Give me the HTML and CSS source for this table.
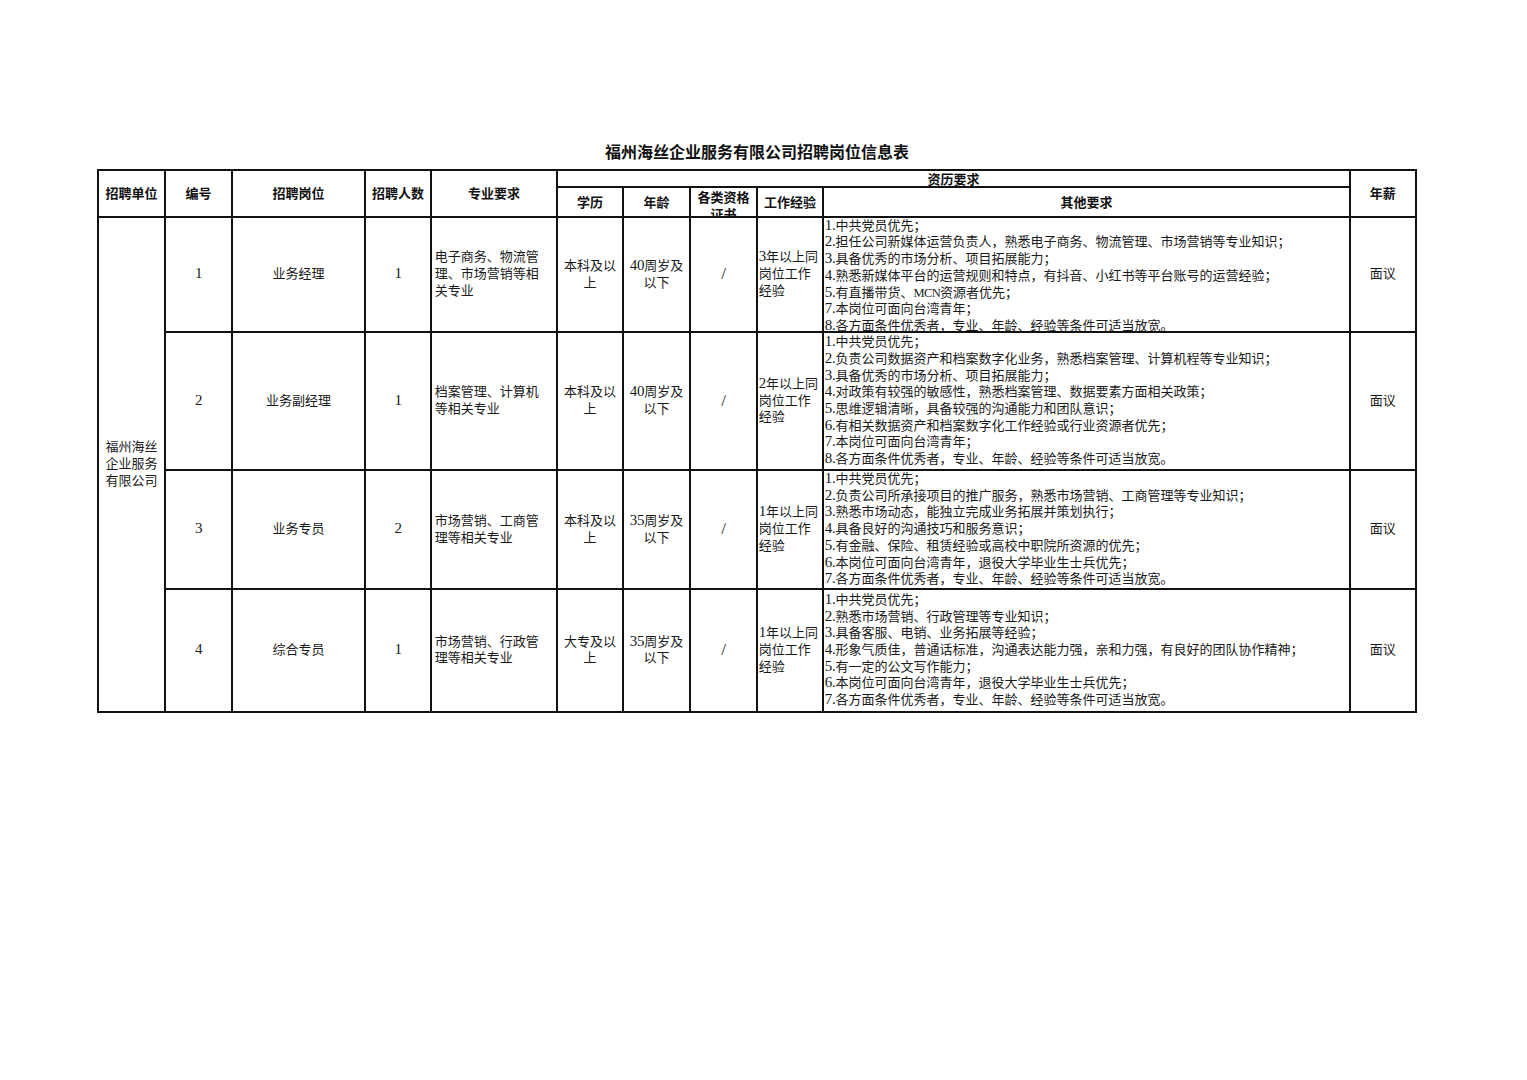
FILE: index.html
```html
<!DOCTYPE html>
<html lang="zh-CN">
<head>
<meta charset="utf-8">
<title>福州海丝企业服务有限公司招聘岗位信息表</title>
<link rel="stylesheet" href="styles.css">
</head>
<body>
<div class="page">
  <h1 class="title">福州海丝企业服务有限公司招聘岗位信息表</h1>
  <div class="sheet">
    <div class="c h r12 c1"><div>招聘单位</div></div>
    <div class="c h r12 c2"><div>编号</div></div>
    <div class="c h r12 c3"><div>招聘岗位</div></div>
    <div class="c h r12 c4"><div>招聘人数</div></div>
    <div class="c h r12 c5"><div>专业要求</div></div>
    <div class="c h r1 span-quals"><div>资历要求</div></div>
    <div class="c h r12 c11"><div>年薪</div></div>
    <div class="c h r2 c6"><div>学历</div></div>
    <div class="c h r2 c7"><div>年龄</div></div>
    <div class="c h r2 c8 tight"><div>各类资格<br>证书</div></div>
    <div class="c h r2 c9"><div>工作经验</div></div>
    <div class="c h r2 c10"><div>其他要求</div></div>

    <div class="c unit"><div>福州海丝<br>企业服务<br>有限公司</div></div>

    <!-- row 1 -->
    <div class="c r3 c2"><div><span class="n">1</span></div></div>
    <div class="c r3 c3"><div>业务经理</div></div>
    <div class="c r3 c4"><div><span class="n">1</span></div></div>
    <div class="c r3 c5 left pad"><div>电子商务、物流管<br>理、市场营销等相<br>关专业</div></div>
    <div class="c r3 c6"><div>本科及以<br>上</div></div>
    <div class="c r3 c7"><div><span class="n">40</span>周岁及<br>以下</div></div>
    <div class="c r3 c8 slash"><div>/</div></div>
    <div class="c r3 c9 left"><div><span class="n">3</span>年以上同<br>岗位工作<br>经验</div></div>
    <div class="c r3 c10 left"><div><span class="n">1.</span>中共党员优先；<br><span class="n">2.</span>担任公司新媒体运营负责人，熟悉电子商务、物流管理、市场营销等专业知识；<br><span class="n">3.</span>具备优秀的市场分析、项目拓展能力；<br><span class="n">4.</span>熟悉新媒体平台的运营规则和特点，有抖音、小红书等平台账号的运营经验；<br><span class="n">5.</span>有直播带货、<span class="m">MCN</span>资源者优先；<br><span class="n">7.</span>本岗位可面向台湾青年；<br><span class="n">8.</span>各方面条件优秀者，专业、年龄、经验等条件可适当放宽。</div></div>
    <div class="c r3 c11"><div>面议</div></div>

    <!-- row 2 -->
    <div class="c r4 c2"><div><span class="n">2</span></div></div>
    <div class="c r4 c3"><div>业务副经理</div></div>
    <div class="c r4 c4"><div><span class="n">1</span></div></div>
    <div class="c r4 c5 left pad"><div>档案管理、计算机<br>等相关专业</div></div>
    <div class="c r4 c6"><div>本科及以<br>上</div></div>
    <div class="c r4 c7"><div><span class="n">40</span>周岁及<br>以下</div></div>
    <div class="c r4 c8 slash"><div>/</div></div>
    <div class="c r4 c9 left"><div><span class="n">2</span>年以上同<br>岗位工作<br>经验</div></div>
    <div class="c r4 c10 left"><div><span class="n">1.</span>中共党员优先；<br><span class="n">2.</span>负责公司数据资产和档案数字化业务，熟悉档案管理、计算机程等专业知识；<br><span class="n">3.</span>具备优秀的市场分析、项目拓展能力；<br><span class="n">4.</span>对政策有较强的敏感性，熟悉档案管理、数据要素方面相关政策；<br><span class="n">5.</span>思维逻辑清晰，具备较强的沟通能力和团队意识；<br><span class="n">6.</span>有相关数据资产和档案数字化工作经验或行业资源者优先；<br><span class="n">7.</span>本岗位可面向台湾青年；<br><span class="n">8.</span>各方面条件优秀者，专业、年龄、经验等条件可适当放宽。</div></div>
    <div class="c r4 c11"><div>面议</div></div>

    <!-- row 3 -->
    <div class="c r5 c2"><div><span class="n">3</span></div></div>
    <div class="c r5 c3"><div>业务专员</div></div>
    <div class="c r5 c4"><div><span class="n">2</span></div></div>
    <div class="c r5 c5 left pad"><div>市场营销、工商管<br>理等相关专业</div></div>
    <div class="c r5 c6"><div>本科及以<br>上</div></div>
    <div class="c r5 c7"><div><span class="n">35</span>周岁及<br>以下</div></div>
    <div class="c r5 c8 slash"><div>/</div></div>
    <div class="c r5 c9 left"><div><span class="n">1</span>年以上同<br>岗位工作<br>经验</div></div>
    <div class="c r5 c10 left"><div><span class="n">1.</span>中共党员优先；<br><span class="n">2.</span>负责公司所承接项目的推广服务，熟悉市场营销、工商管理等专业知识；<br><span class="n">3.</span>熟悉市场动态，能独立完成业务拓展并策划执行；<br><span class="n">4.</span>具备良好的沟通技巧和服务意识；<br><span class="n">5.</span>有金融、保险、租赁经验或高校中职院所资源的优先；<br><span class="n">6.</span>本岗位可面向台湾青年，退役大学毕业生士兵优先；<br><span class="n">7.</span>各方面条件优秀者，专业、年龄、经验等条件可适当放宽。</div></div>
    <div class="c r5 c11"><div>面议</div></div>

    <!-- row 4 -->
    <div class="c r6 c2"><div><span class="n">4</span></div></div>
    <div class="c r6 c3"><div>综合专员</div></div>
    <div class="c r6 c4"><div><span class="n">1</span></div></div>
    <div class="c r6 c5 left pad"><div>市场营销、行政管<br>理等相关专业</div></div>
    <div class="c r6 c6"><div>大专及以<br>上</div></div>
    <div class="c r6 c7"><div><span class="n">35</span>周岁及<br>以下</div></div>
    <div class="c r6 c8 slash"><div>/</div></div>
    <div class="c r6 c9 left"><div><span class="n">1</span>年以上同<br>岗位工作<br>经验</div></div>
    <div class="c r6 c10 left"><div><span class="n">1.</span>中共党员优先；<br><span class="n">2.</span>熟悉市场营销、行政管理等专业知识；<br><span class="n">3.</span>具备客服、电销、业务拓展等经验；<br><span class="n">4.</span>形象气质佳，普通话标准，沟通表达能力强，亲和力强，有良好的团队协作精神；<br><span class="n">5.</span>有一定的公文写作能力；<br><span class="n">6.</span>本岗位可面向台湾青年，退役大学毕业生士兵优先；<br><span class="n">7.</span>各方面条件优秀者，专业、年龄、经验等条件可适当放宽。</div></div>
    <div class="c r6 c11"><div>面议</div></div>
  </div>
</div>
</body>
</html>
```

FILE: styles.css
```css
html, body {
  margin: 0;
  padding: 0;
  background: #ffffff;
}

body {
  font-family: "Liberation Serif", "Noto Sans CJK SC", serif;
  font-size: 13px;
  color: #1a1a1a;
}

.page {
  width: 1320px;
  margin-left: 97px;
  padding-top: 141px;
}

.title {
  margin: 0 0 8px 0;
  height: 20px;
  line-height: 20px;
  font-family: "Noto Sans CJK SC", sans-serif;
  font-size: 16px;
  font-weight: 700;
  text-align: center;
  color: #111;
}

.sheet {
  display: grid;
  grid-template-columns: 65.25px 65.5px 131.5px 64.5px 124.5px 64.5px 65.5px 65.5px 64.5px 525.5px 64.25px;
  grid-template-rows: 15.25px 28.5px 113.5px 136.5px 117.5px 121.25px;
  gap: 1.5px;
  background: #111;
  border: 2px solid #111;
  width: 1316px;
}

.c {
  background: #fff;
  display: flex;
  flex-direction: column;
  justify-content: safe center;
  overflow: hidden;
  text-align: center;
  line-height: 16.7px;
  min-width: 0;
  min-height: 0;
}

.c > div {
  padding: 0 1px;
}

.n {
  font-size: 15px;
  line-height: 0;
  letter-spacing: -0.3px;
}

.m {
  font-size: 12.5px;
  line-height: 0;
  letter-spacing: -0.6px;
}

.slash > div {
  font-size: 17px;
}

.h {
  font-family: "Noto Sans CJK SC", sans-serif;
  font-weight: 700;
  font-size: 13px;
  color: #111;
}

.r1 { grid-row: 1; line-height: 14px; }
.r2 { grid-row: 2; }
.r12 { grid-row: 1 / span 2; }
.r3 { grid-row: 3; }
.r4 { grid-row: 4; }
.r5 { grid-row: 5; }
.r6 { grid-row: 6; }

.c1 { grid-column: 1; }
.c2 { grid-column: 2; }
.c3 { grid-column: 3; }
.c4 { grid-column: 4; }
.c5 { grid-column: 5; }
.c6 { grid-column: 6; }
.c7 { grid-column: 7; }
.c8 { grid-column: 8; }
.c9 { grid-column: 9; }
.c10 { grid-column: 10; }
.c11 { grid-column: 11; }

.span-quals { grid-column: 6 / span 5; }

.tight { line-height: 17px; }

.unit {
  grid-column: 1;
  grid-row: 3 / span 4;
  text-align: center;
}

.left { text-align: left; }

.pad > div { padding-left: 3px; }
```
